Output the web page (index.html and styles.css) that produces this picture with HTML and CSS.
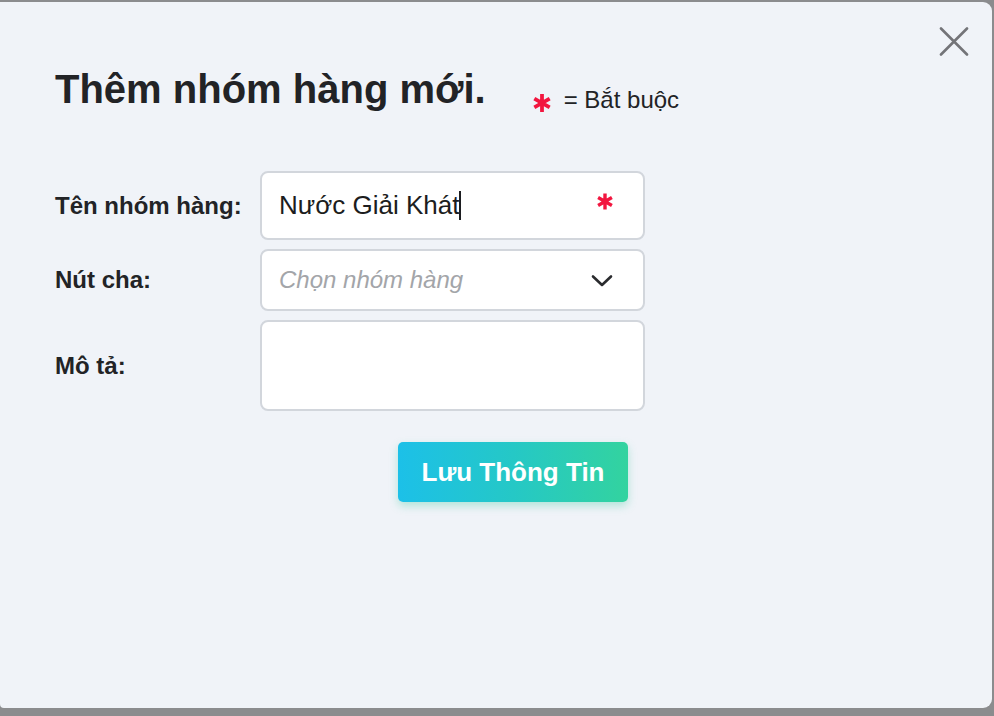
FILE: index.html
```html
<!DOCTYPE html>
<html lang="vi">
<head>
<meta charset="utf-8">
<title>Thêm nhóm hàng mới</title>
<link rel="stylesheet" href="styles.css">
</head>
<body>
<div class="modal">
  <button class="close" aria-label="Đóng">
    <svg width="30" height="29" viewBox="0 0 30 29"><path d="M2 1.5 L28 27.5 M28 1.5 L2 27.5" stroke="#737478" stroke-width="2.6" fill="none" stroke-linecap="round"/></svg>
  </button>
  <div class="header">
    <h1 class="title">Thêm nhóm hàng mới.</h1>
    <div class="legend">
      <svg class="star" width="20" height="20" viewBox="0 0 18 18"><path d="M9 1 V17 M2.1 5 L15.9 13 M15.9 5 L2.1 13" stroke="#f2163f" stroke-width="3.4" fill="none"/></svg>
      <span>= Bắt buộc</span>
    </div>
  </div>
  <div class="form">
    <label class="label">Tên nhóm hàng:</label>
    <div class="field field-name">
      <span class="value">Nước Giải Khát</span><span class="caret"></span>
      <svg class="star in-star" width="18" height="19" viewBox="0 0 18 18"><path d="M9 1 V17 M2.1 5 L15.9 13 M15.9 5 L2.1 13" stroke="#f2163f" stroke-width="3.4" fill="none"/></svg>
    </div>
    <label class="label">Nút cha:</label>
    <div class="field field-select">
      <span class="placeholder">Chọn nhóm hàng</span>
      <svg class="chev" width="22" height="14" viewBox="0 0 22 14"><path d="M2 2.5 L11 11 L20 2.5" stroke="#2a2b2e" stroke-width="2.6" fill="none" stroke-linecap="round" stroke-linejoin="round"/></svg>
    </div>
    <label class="label">Mô tả:</label>
    <div class="field field-desc"></div>
  </div>
  <div class="actions">
    <button class="save">Lưu Thông Tin</button>
  </div>
</div>
</body>
</html>
```

FILE: styles.css
```css
* { box-sizing: border-box; }
html, body { margin: 0; padding: 0; }
body {
  background: #8b8c8e;
  width: 994px;
  height: 716px;
  overflow: hidden;
  font-family: "Liberation Sans", Arial, sans-serif;
  color: #222326;
}
.modal {
  position: relative;
  margin: 2px 2px 0 0;
  height: 706px;
  background: #f0f3f8;
  border-radius: 0 9px 9px 4px;
  padding: 64px 0 0 55px;
}
.close {
  position: absolute;
  top: 25px;
  right: 23px;
  border: 0;
  background: none;
  padding: 0;
  display: flex;
}
.header {
  display: flex;
  align-items: flex-start;
  height: 105px;
}
.title {
  margin: 0;
  font-size: 40px;
  line-height: 46px;
  font-weight: 700;
  color: #222326;
}
.legend {
  display: flex;
  align-items: center;
  gap: 12px;
  margin: 20px 0 0 46px;
  font-size: 24px;
  line-height: 28px;
  color: #222326;
}
.legend .star { margin-top: 5px; }
.form {
  display: grid;
  grid-template-columns: 205px 385px;
  grid-template-rows: 69px 62px 91px;
  row-gap: 9px;
  align-items: center;
}
.label {
  font-size: 24px;
  font-weight: 700;
  line-height: 28px;
  color: #222326;
}
.field {
  align-self: stretch;
  background: #fff;
  border: 2px solid #d2d6dc;
  border-radius: 8px;
  display: flex;
  align-items: center;
  padding: 0 0 0 17px;
  position: relative;
}
.value {
  font-size: 26px;
  color: #1c1d20;
}
.caret {
  width: 2px;
  height: 29px;
  background: #1c1d20;
}
.in-star {
  position: absolute;
  right: 29px;
  top: 19px;
}
.placeholder {
  font-size: 24px;
  font-style: italic;
  color: #a3a5a9;
}
.chev {
  position: absolute;
  right: 30px;
  top: 23px;
}
.actions {
  padding: 31px 0 0 343px;
}
.save {
  width: 230px;
  height: 60px;
  border: 0;
  border-radius: 5px;
  background: linear-gradient(90deg, #1cc0e8 0%, #25c8c6 50%, #33d39f 100%);
  color: #fff;
  font-family: "Liberation Sans", Arial, sans-serif;
  font-size: 26px;
  font-weight: 700;
  box-shadow: 0 4px 9px rgba(60, 200, 160, 0.35);
  padding: 0;
}
```
